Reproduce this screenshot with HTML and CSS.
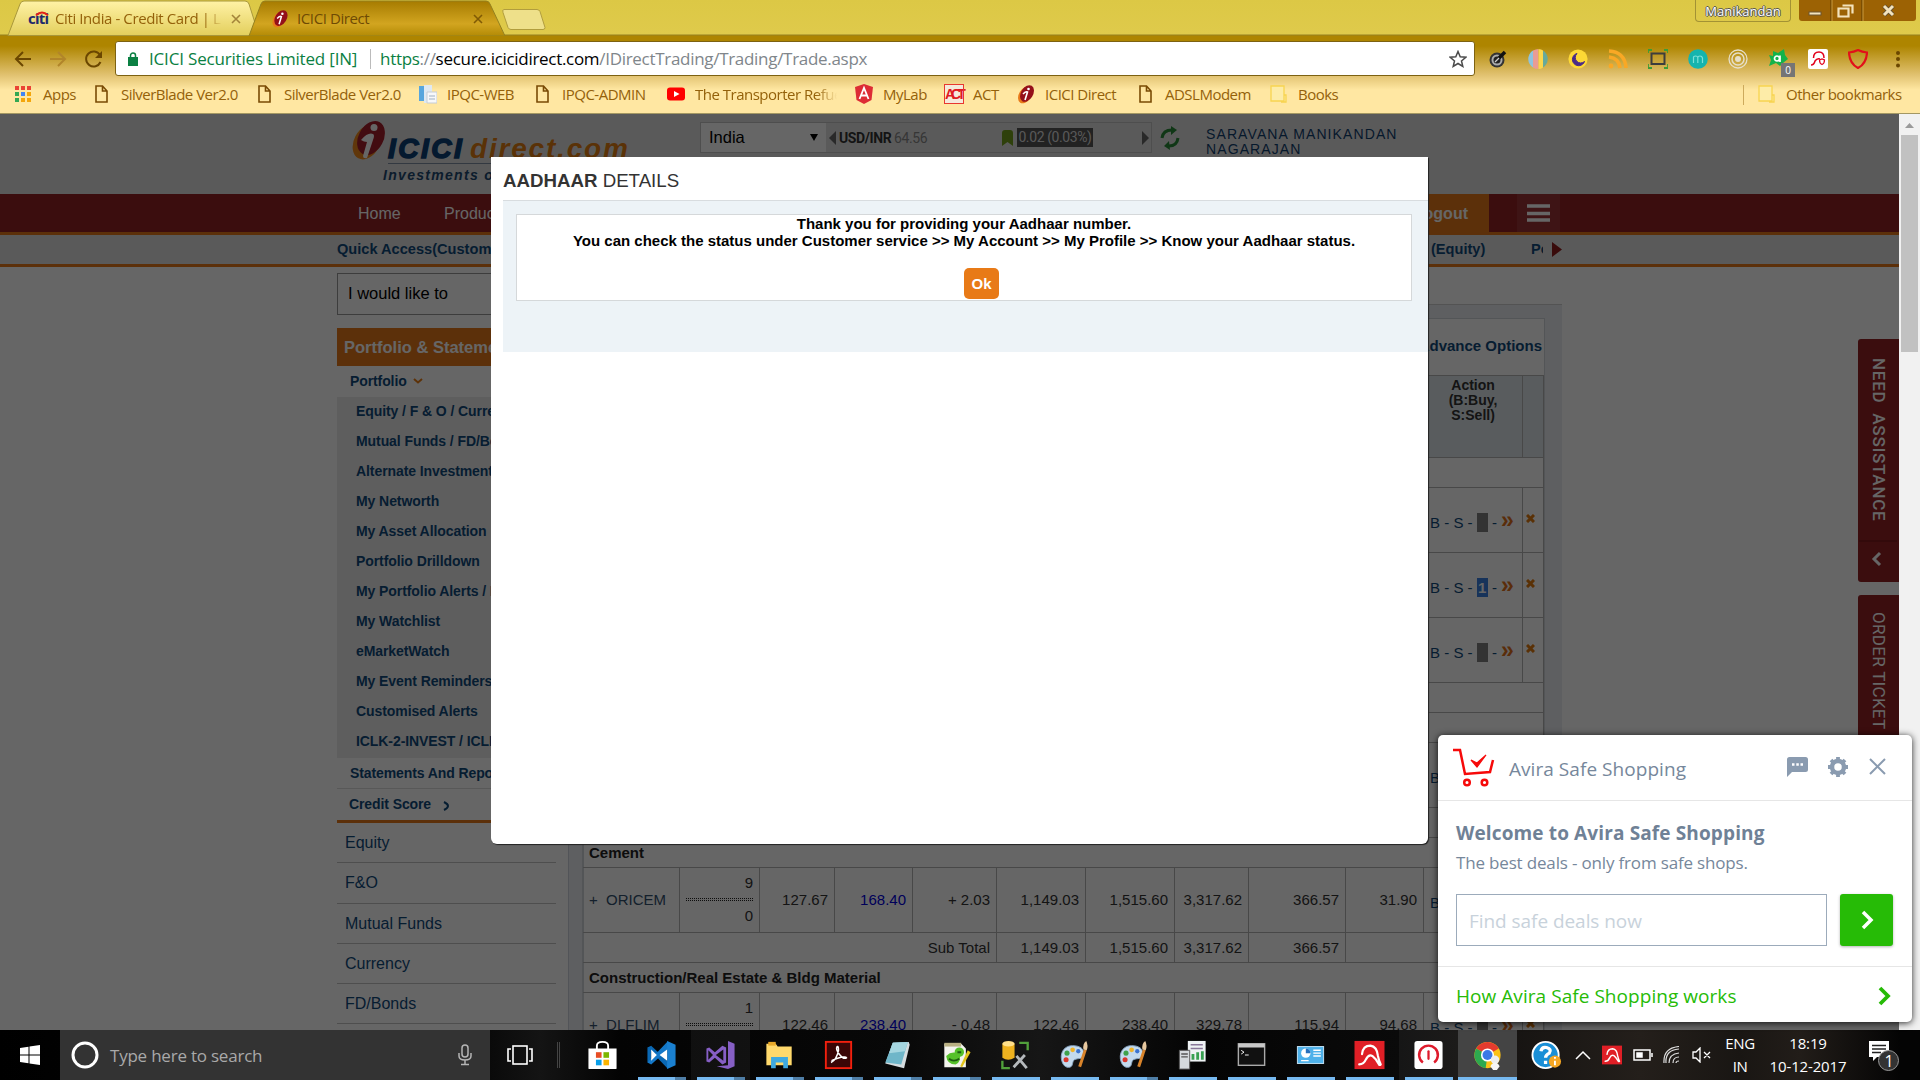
FILE: index.html
```html
<!DOCTYPE html>
<html lang="en">
<head>
<meta charset="utf-8">
<title>ICICI Direct</title>
<link rel="stylesheet" href="styles.css">
</head>
<body>
<svg class="defs" width="0" height="0">
  <symbol id="doc" viewBox="0 0 18 20"><path d="M3 2h6.500l4.500 5v11H3zM9.500 2v5H14" fill="none" stroke="#7a4b05" stroke-width="1.600"/></symbol>
  <symbol id="folder" viewBox="0 0 18 20"><path d="M1 2h13v15H1zM14 11h2v7h-5" fill="#fdeca8" stroke="#f8d450" stroke-width="1.300"/></symbol>
  <symbol id="icici" viewBox="0 0 18 20"><ellipse cx="8" cy="11" rx="6" ry="9" transform="rotate(32 8 11)" fill="#e87a1a"/><ellipse cx="10" cy="9.500" rx="6" ry="9" transform="rotate(32 10 9.500)" fill="#94101a"/><circle cx="11.500" cy="5" r="1.300" fill="#fff"/><path d="M6 10q3-3 4.500-2l-2.500 8" fill="none" stroke="#fff" stroke-width="1.600"/></symbol>
  <symbol id="palette" viewBox="0 0 32 32"><path d="M14 6C6 6 1 12 2 20c1 7 5 10 9 9 4-1 2-6 5-8 4-2 9 0 10-5C27 9 21 6 14 6z" fill="#c3daee" stroke="#8aa8c4"/><circle cx="8" cy="14" r="2.700" fill="#3fa24b"/><circle cx="14" cy="10.500" r="2.500" fill="#f0b429"/><circle cx="7" cy="21" r="2.700" fill="#d8372c"/><circle cx="20" cy="12" r="2.300" fill="#3b74d1"/><path d="M20 28l6-18 3 1-6 18z" fill="#d9842b"/><path d="M25.500 10q-1-6 3-9 2.500 5 .5 10z" fill="#e8c9a0"/></symbol>
  <symbol id="avira" viewBox="0 0 32 32"><path d="M0 1h32v30H0z" fill="#e01f26"/><path d="M5 26q5 0 7-5 3-6 7-4 4 3 7 9 1 1 2 0-2-4-3-9-1-10-8-11-8 0-9 9" fill="none" stroke="#fff" stroke-width="2.300" stroke-linecap="round" stroke-linejoin="round"/></symbol>
  <symbol id="cross" viewBox="0 0 9 9"><path d="M1 1l7 7M8 1l-7 7" stroke="#e07b10" stroke-width="3"/></symbol>
</svg>

<header class="browser">
  <div class="tabstrip">
    <svg class="tabshapes" width="560" height="36">
      <defs>
        <linearGradient id="g1" x2="0" y2="1"><stop offset="0" stop-color="#fff2a6"/><stop offset="1" stop-color="#e3cf5c"/></linearGradient>
        <linearGradient id="g2" x2="0" y2="1"><stop offset="0" stop-color="#a67b00"/><stop offset=".65" stop-color="#d2a520"/><stop offset="1" stop-color="#b38a05"/></linearGradient>
      </defs>
      <path d="M8 35.500L20 4q1-3 4-3h221q3 0 4 3l10 31.500z" fill="url(#g1)" stroke="#a8973a"/>
      <path d="M249 36L261 4q1-3 4-3h221q3 0 4 3l15 32z" fill="url(#g2)" stroke="#94801f"/>
      <path d="M504 9.500h33q2 0 3 2l5 16q0 2-2 2h-32q-2 0-3-2l-5-15q-1-3 1-3z" fill="#eee08a" stroke="#b19d3d"/>
    </svg>
    <div class="tab first">
      <b class="citi">citi<svg width="14" height="5" viewBox="0 0 14 5"><path d="M1 4.500q6-6 12 0" fill="none" stroke="#e2231a" stroke-width="1.800"/></svg></b>
      <span class="title fade">Citi India - Credit Card | L</span>
      <svg class="x" width="10" height="10"><path d="M1 1l8 8M9 1l-8 8" stroke="#a3843a" stroke-width="1.600"/></svg>
    </div>
    <div class="tab second">
      <svg width="18" height="19"><use href="#icici"/></svg>
      <span class="title">ICICI Direct</span>
      <svg class="x" width="10" height="10"><path d="M1 1l8 8M9 1l-8 8" stroke="#805a05" stroke-width="1.600"/></svg>
    </div>
    <div class="user">Manikandan</div>
    <div class="winbtns">
      <svg width="117" height="22"><path d="M0 0h117v18q0 3-3 3H3q-3 0-3-3z" fill="#9c6204"/><path d="M32 0v21M63 0v21" stroke="#5d3a00"/><path d="M33 0v21M64 0v21" stroke="#c99a3e"/>
      <rect x="10" y="12" width="12" height="3" fill="#f3e3bd" stroke="#6b5530"/><path d="M43.500 5.500h10v8M39.500 8.500h10v8h-10z" fill="none" stroke="#f3e3bd" stroke-width="2.200"/><path d="M85 6l9 9M94 6l-9 9" stroke="#574a35" stroke-width="4.500"/><path d="M85 6l9 9M94 6l-9 9" stroke="#f3e3bd" stroke-width="3"/></svg>
    </div>
  </div>

  <div class="toolbar">
    <svg class="navicons" width="104" height="34" fill="none" stroke-width="2"><path d="M31 17H16M23 10l-7 7 7 7" stroke="#6b4700"/><path d="M50 17h15M58 10l7 7-7 7" stroke="#b1852a"/><path d="M100 13a7.500 7.500 0 1 0 .5 7" stroke="#6b4700"/><path d="M102 9v7h-7z" fill="#6b4700"/></svg>
    <div class="omnibox">
      <svg width="10" height="14"><path d="M0 5h10v9H0z" fill="#0b8043"/><path d="M2.500 6V3.500a2.500 2.500 0 0 1 5 0V6" fill="none" stroke="#0b8043" stroke-width="1.500"/></svg>
      <span class="org">ICICI Securities Limited [IN]</span><i></i>
      <span class="url"><em>https</em>://<b>secure.icicidirect.com</b>/IDirectTrading/Trading/Trade.aspx</span>
      <svg class="star" width="18" height="18" viewBox="0 0 18 18"><path d="M9 1.500l2.200 5.200 5.600.5-4.300 3.700 1.300 5.500L9 13.500l-4.800 2.900 1.300-5.500L1.200 7.200l5.600-.5z" fill="none" stroke="#4b4b4b" stroke-width="1.500"/></svg>
    </div>
    <div class="exts">
      <svg viewBox="0 0 20 20"><circle cx="9" cy="11" r="7.500" fill="#333"/><circle cx="9" cy="11" r="5.500" fill="#aaa"/><circle cx="9" cy="11" r="3.500" fill="#222"/><path d="M11 9l6-6" stroke="#111" stroke-width="3.500"/><path d="M7 13l4-4" stroke="#ccc" stroke-width="1.300"/></svg>
      <svg viewBox="0 0 20 20"><path d="M5 1.500v17A10 10 0 0 1 5 1.500" fill="#8ec4df"/><path d="M5 1.500q3-1.500 5.500-1.500v20Q7 20 5 18.500z" fill="#ea9c94"/><path d="M10.500 0q3 0 4.500 1.500v17q-2 1.500-4.500 1.500z" fill="#fbd64c"/><path d="M15 1.500a10 10 0 0 1 0 17z" fill="#67a99a"/></svg>
      <svg viewBox="0 0 20 20"><circle cx="10" cy="10" r="9.600" fill="#fdd835"/><path d="M9 4.500a6.200 6.200 0 1 0 7.500 8A5 5 0 0 1 9 4.500z" fill="#4a2c87" stroke="#4a2c87"/></svg>
      <svg viewBox="0 0 20 20"><circle cx="3" cy="17" r="2.400" fill="#f9a825"/><path d="M1 8q10 1 11 11M1 2q16 1 17 17" fill="none" stroke="#f9a825" stroke-width="3.600"/></svg>
      <svg viewBox="0 0 20 20"><rect x="3.500" y="4.500" width="13" height="10.500" fill="none" stroke="#3d3d3d" stroke-width="2"/><path d="M0 4V1h4M16 1h4v3M20 15v4h-4M4 19H0v-4" fill="none" stroke="#3f9c35" stroke-width="1.800"/></svg>
      <svg viewBox="0 0 20 20"><circle cx="10" cy="10" r="9.800" fill="#15b4ae"/><path d="M5.500 14V8q0-1 2-1t2.300 1.500V14m0-5.500Q10 7 12 7t2.500 2v5" fill="none" stroke="#7ce0d8" stroke-width="1.200"/></svg>
      <svg viewBox="0 0 20 20" fill="none" stroke="#e6dfc9"><circle cx="10" cy="10" r="9" stroke-width="1.300"/><circle cx="10" cy="10" r="6" stroke-width="1.500"/><circle cx="10" cy="10" r="2" fill="#e6dfc9" stroke-width="2"/></svg>
      <svg viewBox="0 0 20 20"><path d="M5 2l5 2 6-4 1 6 3 4-5 4-3 3-4-3-7 3 2-6-2-5 4 1z" fill="#12b34a"/><circle cx="9" cy="9.500" r="2.500" fill="none" stroke="#fff" stroke-width="1.700"/><path d="M12 6.500V13" stroke="#fff" stroke-width="1.700"/></svg>
      <svg viewBox="0 0 20 20"><rect width="20" height="20" rx="2" fill="#fff"/><path d="M3 16q3 0 4-4 2-3 5-2M5.500 9q0-6 5.500-6 5 0 5 6" fill="none" stroke="#e2001a" stroke-width="1.500"/><path d="M11.500 11l2.500-1 2.500 1q0 3.500-2.500 4.500-2.500-1-2.500-4.500z" fill="none" stroke="#e2001a" stroke-width="1.200"/></svg>
      <svg viewBox="0 0 20 20"><path d="M1 3.500Q6 3 10 1q4 2 9 2.500-.5 11-9 15.500Q1.500 14.500 1 3.500z" fill="none" stroke="#e2101a" stroke-width="2.200"/></svg>
      <svg viewBox="0 0 20 20" fill="#6b4700"><circle cx="10" cy="4" r="2"/><circle cx="10" cy="10" r="2"/><circle cx="10" cy="16.500" r="2"/></svg>
      <span class="badge">0</span>
    </div>
  </div>

  <nav class="bookmarks">
    <a><svg viewBox="0 0 18 20"><path d="M0 2h4v4H0zM6 2h4v4H6zM12 2h4v4h-4z" fill="#ea4335"/><path d="M0 8h4v4H0zM0 14h4v4H0z" fill="#34a853"/><path d="M6 8h4v4H6z" fill="#4285f4"/><path d="M12 8h4v4h-4zM6 14h4v4H6zM12 14h4v4h-4z" fill="#f4a60b"/></svg><span>Apps</span></a>
    <a><svg><use href="#doc"/></svg><span>SilverBlade Ver2.0</span></a>
    <a><svg><use href="#doc"/></svg><span>SilverBlade Ver2.0</span></a>
    <a><svg viewBox="0 0 18 20"><path d="M0 2h5v15H0z" fill="#58a6dd"/><path d="M5 1h8v18H5z" fill="#dfe9f2"/><path d="M8 8h10v11H8z" fill="#f7f8fa" stroke="#c5ccd5"/><path d="M10 12h6M10 15h6" stroke="#9fb0c2"/></svg><span>IPQC-WEB</span></a>
    <a><svg><use href="#doc"/></svg><span>IPQC-ADMIN</span></a>
    <a><svg viewBox="0 0 18 20"><rect y="3.500" width="18" height="13" rx="3" fill="#f00"/><path d="M7 7l5.500 3L7 13z" fill="#fff"/></svg><span class="fade2">The Transporter Refueled</span></a>
    <a><svg viewBox="0 0 18 20"><path d="M9 0l9 3-1.500 13L9 20l-7.500-4L0 3z" fill="#dd2c35"/><path d="M4.500 15L9 4l4.500 11M6.500 11.500h5" stroke="#fff" stroke-width="1.800" fill="none"/></svg><span>MyLab</span></a>
    <a><b class="act">ACT</b><span>ACT</span></a>
    <a><svg><use href="#icici"/></svg><span>ICICI Direct</span></a>
    <a><svg><use href="#doc"/></svg><span>ADSLModem</span></a>
    <a><svg><use href="#folder"/></svg><span>Books</span></a>
    <a class="other"><svg><use href="#folder"/></svg><span>Other bookmarks</span></a>
  </nav>
</header>

<div class="viewport">
<main class="page">
  <div class="masthead">
    <div class="logo">
      <svg width="36" height="42" viewBox="0 0 36 42"><ellipse cx="15" cy="22" rx="13" ry="18.500" transform="rotate(28 15 22)" fill="#f08a1d"/><ellipse cx="19" cy="18" rx="12.500" ry="18" transform="rotate(28 19 18)" fill="#a61f2b"/><circle cx="22" cy="7.500" r="3.500" fill="#fff"/><path d="M9 20q7-8 12-6 2 1 0 6l-6 18q-4 1-4-2l4-14q-3 0-6-2z" fill="#fff"/></svg>
      <div class="words"><div class="word"><b>ICICI</b><i>direct.com</i></div><div class="tagline">Investments on your fingertips</div></div>
    </div>
    <div class="market">
      <div class="select">India<svg width="8" height="7"><path d="M0 0h8L4 7z" fill="#000"/></svg></div>
      <svg width="7" height="14"><path d="M7 0v14L0 7z" fill="#666"/></svg>
      <b>USD/INR</b><span class="rate">64.56</span>
      <svg class="flag" width="11" height="16"><path d="M0 3q0-3 3-3h5q3 0 3 3v13l-5.500-4L0 16z" fill="#74a01c"/></svg>
      <span class="chg">0.02 (0.03%)</span>
      <svg class="next" width="7" height="14"><path d="M0 0v14l7-7z" fill="#666"/></svg>
    </div>
    <svg class="refresh" width="20" height="24" viewBox="0 0 20 24" fill="none" stroke="#2a8a38" stroke-width="3"><path d="M2 12Q3 4 12 4M18 12q-1 8-9 8"/><path d="M11 0l6 4-6 5zM9 15l-5 5 6 4z" fill="#2a8a38" stroke="none"/></svg>
    <div class="client">SARAVANA MANIKANDAN<br>NAGARAJAN</div>
  </div>
  <nav class="mainnav">
    <div class="inner"><span>Home</span><span>Products</span><b class="logout">Logout</b><svg class="burger" width="43" height="38"><path d="M0 0h43v38H0z" fill="#fff" fill-opacity=".08"/><path d="M10 12h23M10 19.500h23M10 26h23" stroke="#fff" stroke-width="3.500"/></svg></div>
  </nav>
  <div class="quick"><div class="inner"><span>Quick Access(Customise)</span><span class="eq">(Equity)</span><span class="po">Portfolio</span><svg width="10" height="15"><path d="M0 0v15l10-7.500z" fill="#8f1d1d"/></svg></div></div>

  <div class="content">
    <aside class="side">
      <div class="would">I would like to</div>
      <h3>Portfolio &amp; Statements</h3>
      <div class="row pf">Portfolio<svg width="10" height="6"><path d="M1 1l4 3.500L9 1" fill="none" stroke="#e87d16" stroke-width="2"/></svg></div>
      <ul class="sub">
        <li>Equity / F &amp; O / Currency</li><li>Mutual Funds / FD/Bonds</li><li>Alternate Investments</li><li>My Networth</li><li>My Asset Allocation</li><li>Portfolio Drilldown</li><li>My Portfolio Alerts / News</li><li>My Watchlist</li><li>eMarketWatch</li><li>My Event Reminders</li><li>Customised Alerts</li><li>ICLK-2-INVEST / ICLK</li>
      </ul>
      <div class="row st">Statements And Reports</div>
      <div class="row cs">Credit Score<svg width="7" height="10"><path d="M1 1q4 2 4 4t-4 4" fill="none" stroke="#104a7c" stroke-width="2"/></svg></div>
      <ul class="cats"><li>Equity</li><li>F&amp;O</li><li>Mutual Funds</li><li>Currency</li><li>FD/Bonds</li></ul>
    </aside>
    <section class="panel">
      <div class="sheet">
        <div class="adv">Advance Options</div>
        <table>
          <colgroup><col class="c1"><col class="c2"><col class="c3"><col class="c4"><col class="c5"><col class="c6"><col class="c7"><col class="c8"><col class="c9"><col class="c10"><col class="c11"><col class="c12"></colgroup>
          <tr class="head"><th colspan="10"></th><th>Action<br>(B:Buy,<br>S:Sell)</th><th></th></tr>
          <tr class="s"><td colspan="12"></td></tr>
          <tr class="l"><td colspan="10"></td><td class="ac">B - S - <mark>&nbsp;</mark> - <u>»</u></td><td class="del"><svg width="9" height="9"><use href="#cross"/></svg></td></tr>
          <tr class="l"><td colspan="10"></td><td class="ac">B - S - <mark class="on">1</mark> - <u>»</u></td><td class="del"><svg width="9" height="9"><use href="#cross"/></svg></td></tr>
          <tr class="l"><td colspan="10"></td><td class="ac">B - S - <mark>&nbsp;</mark> - <u>»</u></td><td class="del"><svg width="9" height="9"><use href="#cross"/></svg></td></tr>
          <tr class="s"><td colspan="12"></td></tr>
          <tr class="s"><td colspan="12"></td></tr>
          <tr class="l"><td colspan="10"></td><td class="ac">B</td><td></td></tr>
          <tr class="s"><td colspan="12"></td></tr>
          <tr class="s"><td colspan="12" class="sec">Cement</td></tr>
          <tr class="l"><td class="nm">+ &nbsp;ORICEM</td><td class="q">9<hr>0</td><td>127.67</td><td class="bl">168.40</td><td>+ 2.03</td><td>1,149.03</td><td>1,515.60</td><td>3,317.62</td><td>366.57</td><td>31.90</td><td class="ac">B</td><td></td></tr>
          <tr class="s"><td colspan="5">Sub Total</td><td>1,149.03</td><td>1,515.60</td><td>3,317.62</td><td>366.57</td><td colspan="3"></td></tr>
          <tr class="s"><td colspan="12" class="sec">Construction/Real Estate &amp; Bldg Material</td></tr>
          <tr class="l"><td class="nm">+ &nbsp;DLFLIM</td><td class="q">1<hr>0</td><td>122.46</td><td class="bl">238.40</td><td>- 0.48</td><td>122.46</td><td>238.40</td><td>329.78</td><td>115.94</td><td>94.68</td><td class="ac">B - S - <mark>&nbsp;</mark> - <u>»</u></td><td class="del"><svg width="9" height="9"><use href="#cross"/></svg></td></tr>
        </table>
      </div>
    </section>
  </div>
  <div class="sidetabs">
    <div class="need"><span>NEED&nbsp; ASSISTANCE</span><svg width="41" height="42"><path d="M1 1h38" stroke="#6e1414"/><path d="M22 13l-6 6 6 6" fill="none" stroke="#fff" stroke-width="3"/></svg></div>
    <div class="order"><span>ORDER TICKET</span></div>
  </div>
  <div class="shade"></div>
  <div class="modal">
    <h2><b>AADHAAR</b> DETAILS</h2>
    <div class="mbody"><div class="mbox">
      <p>Thank you for providing your Aadhaar number.</p>
      <p>You can check the status under Customer service &gt;&gt; My Account &gt;&gt; My Profile &gt;&gt; Know your Aadhaar status.</p>
      <button>Ok</button>
    </div></div>
  </div>
</main>
<div class="scroll"><svg width="9" height="5"><path d="M0 5h9L4.500 0z" fill="#9a9a9a"/></svg><div class="thumb"></div></div>
</div>

<footer class="taskbar">
  <div class="start"><svg width="20" height="20"><path d="M0 3l8.500-1.200V9.500H0zM9.500 1.600L20 0v9.500H9.500zM0 10.500h8.500v7.700L0 17zM9.500 10.500H20V20L9.500 18.400z" fill="#fff"/></svg></div>
  <div class="search"><svg width="28" height="28"><circle cx="14" cy="14" r="12" fill="none" stroke="#fff" stroke-width="3"/></svg><span>Type here to search</span><svg class="mic" width="16" height="22" fill="none" stroke="#b5b5b5" stroke-width="1.500"><rect x="5" y="1" width="6" height="12" rx="3"/><path d="M2 9v3q0 4 6 4t6-4V9M8 16v4M4 20.500h8"/></svg></div>
  <div class="tv"><svg width="26" height="22" fill="none" stroke="#fff" stroke-width="1.600"><rect x="6" y="2" width="14" height="18"/><path d="M4 5H1v12h3M22 5h3v12h-3"/></svg><i></i></div>
  <div class="apps">
    <span><svg viewBox="0 0 32 32"><path d="M10 11V6q0-4 6-4t6 4v5" fill="none" stroke="#fff" stroke-width="2"/><path d="M1 9h30v21q0 1-1 1H2q-1 0-1-1z" fill="#fff"/><path d="M9 13h6v6H9z" fill="#e74e25"/><path d="M17 13h6v6h-6z" fill="#7db700"/><path d="M9 21h6v6H9z" fill="#0a9fe9"/><path d="M17 21h6v6h-6z" fill="#fbb400"/></svg></span>
    <span class="run multi"><svg viewBox="0 0 32 32"><path d="M1 8l4-2 18 17v8z" fill="#0a68b4"/><path d="M1 8l4 2v12l-4 2z" fill="#0a68b4"/><path d="M1 24l4 2L23 10V1z" fill="#1478c8"/><path d="M22 1l9 4v22l-9 4z" fill="#1a80d0"/><path d="M5 10v12l6-6zM22 10v12l-8-6z" fill="#fff"/></svg></span>
    <span class="run multi lit"><svg viewBox="0 0 32 32"><path d="M24 1l7 3v24l-7 3-12-3 12-1z" fill="#865fc5"/><path d="M3 11v10l5-5zm8 5l8-6v12zM1 9l3-1 6 5 8-7 4 2v16l-4 2-8-7-6 5-3-1z" fill="#865fc5" fill-rule="evenodd"/></svg></span>
    <span class="run multi"><svg viewBox="0 0 32 32"><path d="M2 4h10l2 3h15v20H2z" fill="#ffd96c"/><path d="M4 2h8v4H4z" fill="#e8a92a"/><path d="M7 30V18h18v12h-5v-6h-8v6z" fill="#3fa9e0"/></svg></span>
    <span class="run multi"><svg viewBox="0 0 32 32"><rect x="2.500" y="2" width="27" height="28" fill="#3a0606" stroke="#f3200e" stroke-width="2"/><path d="M8 24q6-3 8-13 0-5-1.500-4-2 3 3 9 4 5 7 3-1-3-16 3" fill="none" stroke="#fff" stroke-width="1.600"/></svg></span>
    <span class="run multi"><svg viewBox="0 0 32 32"><path d="M11 3l17-1 1 3-6 25-20-5z" fill="#d5dde0"/><path d="M11 3l16-1-7 24-17-2z" fill="#6fb6c9"/><path d="M11 3l16-1-3 10-17 2z" fill="#a5d6e0"/></svg></span>
    <span class="run multi"><svg viewBox="0 0 32 32"><path d="M3 4h18l5 5v20H3z" fill="#f4f4ee"/><path d="M3 3h18v4H3z" fill="#b9b083"/><circle cx="19" cy="13" r="5" fill="#56c12a"/><path d="M5 17q6-6 14-2 3 8-4 11-9 0-10-9z" fill="#56c12a"/><path d="M8 20q5 4 11 0M17 13h4" stroke="#1d5d10" stroke-width="2" fill="none"/><path d="M20 28L28 11l3 2-9 16z" fill="#e2c31b"/></svg></span>
    <span class="run"><svg viewBox="0 0 32 32"><path d="M2 4v15q6 4 13 0V4" fill="#eeb21f"/><ellipse cx="8.500" cy="4" rx="6.500" ry="3" fill="#ffe08a"/><path d="M20 3h9v8M2 22v8h8" fill="none" stroke="#51a13b" stroke-width="2.500"/><path d="M14 29l12-13M17 17l11 13" stroke="#b5b9bc" stroke-width="3"/></svg></span>
    <span class="run"><svg><use href="#palette"/></svg></span>
    <span class="run multi"><svg><use href="#palette"/></svg></span>
    <span class="run"><svg viewBox="0 0 32 32"><path d="M11 1h19v22H11z" fill="#eef2f4"/><path d="M14 5h13M14 9h13" stroke="#879" stroke-width="1.500"/><path d="M15 21v-6h3v6M20 21v-8h3v8M25 21v-9h3v9" fill="#38a051"/><path d="M2 11h11v20H2z" fill="#d5dadd" stroke="#555"/><path d="M4 15h7M4 18h7" stroke="#555" stroke-width="1.500"/></svg></span>
    <span class="run"><svg viewBox="0 0 32 32"><rect x="2" y="4" width="28" height="23" fill="#111" stroke="#aaa" stroke-width="1.500"/><path d="M2 4h28v4H2z" fill="#c8c8c8"/><path d="M5 11l3 2-3 2M9 16h4" stroke="#fff" fill="none"/></svg></span>
    <span class="run"><svg viewBox="0 0 32 32"><rect x="2" y="7" width="28" height="18" fill="#4eb1ea" stroke="#c9e7fa"/><circle cx="11" cy="14" r="5" fill="#fff"/><path d="M11 14V9a5 5 0 0 1 5 5z" fill="#2871bd"/><path d="M19 11h8M19 14h8M19 17h8M6 22h8" stroke="#fff" stroke-width="1.500"/></svg></span>
    <span class="run"><svg><use href="#avira"/></svg></span>
    <span class="run lit"><svg viewBox="0 0 32 32"><rect x="1" y="1" width="30" height="30" rx="3" fill="#fff"/><path d="M10 24a10 10 0 1 1 12 0" fill="none" stroke="#de1b2c" stroke-width="2.600"/><path d="M16 12v8" stroke="#de1b2c" stroke-width="2.400" stroke-linecap="round"/></svg></span>
    <span class="run active"><svg viewBox="0 0 32 32"><circle cx="16" cy="16" r="14" fill="#fbc116"/><path d="M16 16L4 9A14 14 0 0 1 28 9z" fill="#e33b2e"/><path d="M16 16l-2 14A14 14 0 0 1 4 9z" fill="#2da94f"/><circle cx="16" cy="16" r="7" fill="#fff"/><circle cx="16" cy="16" r="5.300" fill="#3c78e6"/><circle cx="24" cy="21" r="4.500" fill="#eee"/><path d="M19 28q5-8 10 0l-3 4h-4z" fill="#f6f6f6"/></svg></span>
    <span><svg viewBox="0 0 32 32"><circle cx="15" cy="16" r="14" fill="#1a8fd6" stroke="#fff" stroke-width="2"/><path d="M10 12q1-5 6-4 6 2 3 6-4 2-4 5M15 22v3.500" fill="none" stroke="#fff" stroke-width="3.500"/><circle cx="25" cy="23" r="6.500" fill="#f5a623"/><path d="M25 22v5M25 18v2" stroke="#fff" stroke-width="2"/></svg></span>
  </div>
  <div class="tray">
    <svg width="16" height="10"><path d="M1 9l7-7 7 7" fill="none" stroke="#fff" stroke-width="1.500"/></svg>
    <svg width="20" height="20"><use href="#avira"/></svg>
    <svg width="20" height="12" fill="none" stroke="#fff" stroke-width="1.500"><rect x="1" y="1" width="16" height="10"/><path d="M19 4v4"/><path d="M4 4h5v4H4z" fill="#fff"/></svg>
    <svg width="18" height="18" fill="none" stroke="#ddd" stroke-width="1.200"><path d="M3 17Q2 4 16 3M6 17Q6 8 16 7M10 17q0-6 6-6M13 17q0-2 3-2M1 17Q0 2 16 .5"/></svg>
    <svg width="20" height="16" fill="none" stroke="#fff" stroke-width="1.300"><path d="M1 5h3l4-4v14l-4-4H1zM12 5l6 6M18 5l-6 6"/></svg>
  </div>
  <div class="lang">ENG<br>IN</div>
  <div class="clock">18:19<br>10-12-2017</div>
  <div class="notif"><svg width="34" height="34"><path d="M1 3h20v16H9l-4 4v-4H1z" fill="#fff"/><path d="M4 7.500h14M4 11h14M4 14.500h9" stroke="#222" stroke-width="1.300"/><circle cx="20.500" cy="22.500" r="10" fill="#333" stroke="#999"/></svg><span>1</span></div>
</footer>

<div class="avira">
  <div class="ahead">
    <svg width="42" height="40" viewBox="0 0 42 40" fill="none" stroke="#f60a0a" stroke-width="2.500"><path d="M0 2h7l5 24 25-2 3-12"/><path d="M18 12l6 7 9-12-9 8z" fill="#f60a0a" stroke-width="1.200"/><circle cx="14" cy="34.500" r="2.800"/><circle cx="31.500" cy="34.500" r="2.800"/></svg>
    <span>Avira Safe Shopping</span>
    <svg class="chat" width="21" height="20"><path d="M2.500 0h16Q21 0 21 2.500v10Q21 15 18.500 15H5l-5 5V2.500Q0 0 2.500 0z" fill="#8a9bb0"/><path d="M5 7.500h2.500M9.300 7.500h2.500M13.500 7.500H16" stroke="#fff" stroke-width="2.500"/></svg>
    <svg class="gear" width="22" height="22"><circle cx="11" cy="11" r="6" fill="none" stroke="#8a9bb0" stroke-width="4.500"/><path d="M11 1v3M11 18v3M1 11h3M18 11h3M4 4l2 2M16 16l2 2M18 4l-2 2M6 16l-2 2" stroke="#8a9bb0" stroke-width="3.800"/></svg>
    <svg class="cls" width="17" height="17"><path d="M1 1l15 15M16 1L1 16" stroke="#8a9bb0" stroke-width="2"/></svg>
  </div>
  <div class="abody">
    <h4>Welcome to Avira Safe Shopping</h4>
    <p>The best deals - only from safe shops.</p>
    <div class="find"><div class="inp">Find safe deals now</div><div class="go"><svg width="14" height="20"><path d="M3 2l8 8-8 8" fill="none" stroke="#fff" stroke-width="3.500"/></svg></div></div>
  </div>
  <div class="afoot"><span>How Avira Safe Shopping works</span><svg width="14" height="20"><path d="M2 2l8 8-8 8" fill="none" stroke="#26bb06" stroke-width="3.800"/></svg></div>
</div>
</body>
</html>
```
FILE: styles.css
```css
* { box-sizing: border-box; }
body { margin: 0; width: 1920px; height: 1080px; overflow: hidden; position: relative; display: flex; flex-direction: column; font-family: "Liberation Sans", Arial, sans-serif; }
.defs { position: absolute; }
ul { list-style: none; margin: 0; padding: 0; }
svg { flex: none; display: block; }

/* browser chrome */
.browser { height: 114px; flex: none; font-family: "Open Sans", "Noto Sans", sans-serif; color: #94610a; border-bottom: 1px solid #a39763; background: linear-gradient(#dcc845 0, #dfca4b 34px, #94801f 35px, #ae8500 36px, #ae8500 46px, #e3c474 76px, #ffe7a2 90px, #ffe7a2 113px); }
.tabstrip { height: 36px; position: relative; display: flex; }
.tabshapes { position: absolute; left: 0; top: 0; }
.tab { position: relative; display: flex; align-items: center; height: 36px; font-size: 15px; letter-spacing: -.4px; padding-top: 0; }
.first { width: 249px; padding-left: 28px; }
.second { width: 256px; padding-left: 22px; color: #6e4a04; }
.tab .title { white-space: nowrap; }
.tab .x { margin-top: 2px; }
.citi { position: relative; color: #1f2a6b; font-size: 15px; width: 20px; letter-spacing: -.8px; margin-right: 7px; }
.citi svg { position: absolute; left: 7px; top: 3px; }
.fade { width: 168px; overflow: hidden; -webkit-mask: linear-gradient(90deg, #000 88%, transparent); mask: linear-gradient(90deg, #000 88%, transparent); }
.first .x { margin-left: 8px; }
.second .title { width: 176px; margin-left: 8px; }
.user { margin-left: 1190px; width: 96px; height: 22px; border: 1px solid #a39234; border-top: 0; border-radius: 0 0 4px 4px; color: #fff; font-size: 13px; line-height: 22px; text-align: center; letter-spacing: 0; text-shadow: 1px 0 0 #555, -1px 0 0 #555, 0 1px 0 #555, 0 -1px 0 #555; }
.winbtns { margin-left: 8px; }
.toolbar { height: 40px; display: flex; align-items: center; padding-top: 5px; }
.navicons { margin-right: 11px; }
.omnibox { width: 1360px; height: 35px; background: #fff; border: 1px solid #7d6212; border-radius: 3px; display: flex; align-items: center; padding-left: 12px; font-size: 17px; letter-spacing: -.3px; white-space: nowrap; }
.org { color: #0b8043; margin-left: 11px; width: 221px; letter-spacing: -.18px; }
.omnibox i { width: 1px; height: 20px; background: #bbb; }
.url { color: #80868b; margin-left: 9px; }
.url em { font-style: normal; color: #0b8043; }
.url b { font-weight: 400; color: #000; }
.star { margin-left: auto; margin-right: 7px; }
.exts { position: relative; display: flex; gap: 20px; margin-left: 13px; }
.exts svg { width: 20px; height: 20px; }
.badge { position: absolute; left: 293px; top: 14px; width: 14px; height: 14px; background: #757575; color: #fff; font-size: 10px; line-height: 14px; text-align: center; }
.bookmarks { height: 36px; display: grid; grid-template-columns: 78px 163px 163px 115px 133px 188px 90px 72px 120px 133px 488px 162px; padding-left: 15px; align-items: center; font-size: 15px; letter-spacing: -.5px; }
.bookmarks a { display: flex; align-items: center; gap: 10px; white-space: nowrap; }
.bookmarks a span { margin-top: -1px; }
.bookmarks svg { width: 18px; height: 20px; }
.bookmarks .other { position: relative; }
.other::before { content: ""; position: absolute; left: -15px; top: 1px; width: 1px; height: 20px; background: #cdaa5c; }
.fade2 { width: 142px; overflow: hidden; -webkit-mask: linear-gradient(90deg, #000 85%, transparent); mask: linear-gradient(90deg, #000 85%, transparent); }
.act { width: 18px; height: 18px; background: #f5e9dc; color: #e01b22; font: bold 14px/18px "Liberation Sans", sans-serif; letter-spacing: -4px; text-align: left; outline: 1px solid #e8382f; padding-left: 0; }

/* web page */
.viewport { height: 916px; flex: none; display: flex; }
.page { width: 1899px; height: 916px; position: relative; overflow: hidden; background: #fff; }
.masthead { height: 80px; background: #e2e2e2; padding: 6px 0 0 352px; display: flex; align-items: flex-start; }
.logo { display: flex; width: 348px; }
.words { margin-top: 14px; white-space: nowrap; }
.word { height: 30px; display: flex; font-size: 28px; line-height: 30px; font-style: italic; color: #0b3f75; border-bottom: 1px solid #7f8fa3; width: 242px; }
.word b { width: 82px; letter-spacing: 2.500px; -webkit-text-stroke: 1.500px #0b3f75; }
.word i { color: #e07d12; font-weight: 700; letter-spacing: 1.800px; }
.tagline { font: italic bold 14px/22px "Liberation Sans", sans-serif; color: #20476f; letter-spacing: 1.300px; margin-left: -5px; }
.market { width: 452px; height: 31px; margin-top: 2px; border: 1px solid #c4c4c4; display: flex; align-items: center; font: 14px "Roboto", sans-serif; letter-spacing: -.4px; color: #888; }
.market > * { flex: none; }
.select { width: 125px; height: 29px; background: #fff; color: #000; font: 16.500px/29px "Liberation Sans", Arial, sans-serif; letter-spacing: 0; padding: 0 8px 0 8px; display: flex; justify-content: space-between; align-items: center; margin-right: 3px; }
.market b { color: #333; margin-left: 3px; width: 55px; }
.rate { width: 108px; }
.chg { background: #555; color: #ddd; margin-left: 4px; width: 76px; height: 19px; line-height: 19px; text-align: center; }
.next { margin-left: 49px; }
.refresh { margin: 6px 0 0 8px; }
.client { margin: 7px 0 0 26px; font-size: 14px; line-height: 15px; letter-spacing: 1.100px; color: #10406e; }
.inner { width: 1225px; margin: 0 auto; display: flex; align-items: center; height: 100%; }
.mainnav { height: 41px; background: #932124; border-bottom: 3px solid #e6781a; color: #fff; font-size: 16px; }
.mainnav span { margin-left: 21px; width: 65px; padding-top: 1px; }
.logout { margin-left: 892px; height: 41px; width: 88px; padding-right: 21px; background: #e6781a; line-height: 39px; text-align: right; align-self: flex-start; }
.burger { margin-left: 28px; }
.quick { height: 32px; background: #e2e2e2; border-bottom: 3px solid #e6781a; font-size: 14.600px; font-weight: 700; color: #104a7c; }
.quick span { white-space: nowrap; overflow: hidden; padding-bottom: 1px; flex: none; }
.quick .eq { margin-left: 921px; width: 57px; }
.quick span:first-child { width: 173px; }
.quick .po { margin-left: 43px; width: 12px; }
.quick svg { margin-left: 9px; }
.content { width: 1225px; margin: 0 auto; display: flex; }
.side { width: 219px; flex: none; padding-top: 6px; color: #104a7c; white-space: nowrap; }
.would { height: 42px; border: 1px solid #999; font-size: 16.500px; line-height: 39px; padding-left: 10px; color: #000; }
.side h3 { margin: 13px 0 0; height: 38px; background: #e6781a; color: #fff; font-size: 16.500px; line-height: 39px; padding-left: 7px; overflow: hidden; }
.row { font-size: 14px; font-weight: 700; padding-left: 13px; display: flex; align-items: center; letter-spacing: -.1px; }
.pf { height: 31px; gap: 6px; padding-bottom: 2px; }
.sub { background: #ebebeb; height: 361px; margin-top: 0; }
.sub li { height: 30px; line-height: 29px; padding-left: 19px; font-size: 14px; letter-spacing: -.08px; font-weight: 700; overflow: hidden; }
.st { height: 31px; border-bottom: 1px solid #ddd; }
.cs { height: 34px; border-bottom: 3px solid #e6781a; gap: 12px; padding: 0 0 2px 12px; }
.cs svg { margin-top: 4px; }
.cats li { height: 40.300px; line-height: 39px; border-bottom: 1px solid #c3c3c3; font-size: 16px; padding-left: 8px; }
.panel { margin: 37px 0 0 12px; width: 994px; height: 726px; background: #ebeef3; border-top: 1px solid #d0d0d0; border-left: 1px solid #cdd3dc; padding: 13px 17px 0 13px; }
.sheet { border: 1px solid #cfd4da; border-bottom: 0; background: #fff; width: 963px; height: 712px; overflow: hidden; }
.adv { height: 56px; line-height: 54px; text-align: right; font-size: 15px; font-weight: 700; color: #104a7c; padding-right: 2px; }
table { border-collapse: collapse; table-layout: fixed; width: 960px; font-size: 15px; color: #333; }
td, th { border: 1px solid #b5b5b5; padding: 0 6px 2px 0; text-align: right; overflow: hidden; white-space: nowrap; }
tr > :first-child { border-left-color: #cfd4da; }
.c1 { width: 96px; } .c2 { width: 80px; } .c3 { width: 75px; } .c4 { width: 78px; } .c5 { width: 84px; } .c6 { width: 89px; }
.c7 { width: 89px; } .c8 { width: 74px; } .c9 { width: 97px; } .c10 { width: 78px; } .c11 { width: 99px; } .c12 { width: 21px; }
.head { height: 82px; background: #dee7ec; }
.head th { font-size: 14px; line-height: 15px; vertical-align: top; text-align: center; padding: 2px 0 0; }
.s { height: 30px; }
.s td { padding-bottom: 0; }
.l { height: 65px; }
td.sec { text-align: left; font-weight: 700; padding-left: 5px; color: #222; }
td.nm { text-align: left; padding-left: 5px; color: #33506e; }
td.q { line-height: 18px; }
.q hr { margin: 6px 0 6px 6px; height: 3px; border: 1px dotted #222; }
td.bl { color: #0000e0; }
td.ac { text-align: left; padding: 5px 0 0 6px; color: #104a7c; word-spacing: 0; }
.ac mark { display: inline-block; width: 11px; height: 19px; line-height: 19px; background: #808080; color: #fff; vertical-align: middle; margin-top: -3px; font-weight: 700; text-align: center; }
.ac .on { background: #3b7fe0; }
.ac u { text-decoration: none; color: #e0701a; font-weight: 700; font-size: 23px; line-height: 15px; }
td.del { padding: 0 0 4px 3px; }
.sidetabs { position: absolute; right: 0; top: 225px; display: flex; flex-direction: column; gap: 13px; color: #fff; font-family: "Roboto", sans-serif; font-size: 17px; }
.sidetabs div { width: 41px; background: #932124; border-radius: 3px 0 0 3px; }
.sidetabs span { writing-mode: vertical-rl; width: 41px; line-height: 41px; display: block; }
.need { height: 243px; font-weight: 500; }
.need span { height: 201px; padding-top: 19px; letter-spacing: .75px; }
.order { height: 180px; }
.order span { padding-top: 17px; letter-spacing: .3px; }
.shade { position: absolute; inset: 0; background: rgba(0, 0, 0, .6); }
.modal { position: absolute; left: 491px; top: 43px; width: 937px; height: 687px; background: #fff; border-radius: 0 0 6px 6px; box-shadow: 1px 1px 1px #222; padding-left: 12px; }
.modal h2 { margin: 0; height: 44px; line-height: 48px; font-size: 18.700px; font-weight: 400; color: #333; border-bottom: 1px solid #d8dcdf; }
.mbody { background: #edf3f7; height: 151px; padding: 13px 16px 0 13px; }
.mbox { height: 87px; background: #fff; border: 1px solid #d5d8da; text-align: center; font-size: 15px; font-weight: 700; padding-top: 0; color: #000; white-space: nowrap; }
.mbox p { margin: 0; line-height: 17px; }
.mbox button { display: block; margin: 19px auto 0 447px; width: 35px; height: 31px; border: 0; border-radius: 5px; background: #e87a17; color: #fff; font: bold 15px "Liberation Sans", sans-serif; padding: 0; }
.scroll { width: 21px; background: #f1f1f1; padding: 9px 2px 0; }
.scroll svg { margin-left: 4px; }
.thumb { margin-top: 7px; height: 217px; width: 17px; background: #c1c1c1; }

/* taskbar */
.taskbar { height: 50px; flex: none; display: flex; align-items: center; color: #fff; font-family: "Open Sans", "Noto Sans", sans-serif; background: linear-gradient(90deg, #000 0, #0a0a0a 490px, #141414 540px, #030303 620px, #080808 900px, #161616 1040px, #040404 1200px, #0a0a0a 1400px, #241f1b 1640px, #191613 1740px, #221d19 1800px, #040404 1900px); }
.taskbar > * { flex: none; }
.start { width: 60px; padding-left: 20px; }
.search { width: 430px; height: 50px; background: #333; display: flex; align-items: center; padding: 0 17px 0 11px; color: #a9a9a9; font-size: 17px; letter-spacing: -.22px; }
.search span { margin-left: 11px; }
.mic { margin-left: auto; }
.tv { width: 83px; display: flex; align-items: center; padding-left: 17px; }
.tv i { margin-left: 24px; width: 3px; height: 26px; border: 1px solid #444; border-width: 0 1px; }
.apps { display: flex; height: 50px; }
.apps span { width: 59px; height: 50px; padding: 10px 14px 0; position: relative; }
.apps svg { width: 31px; height: 30px; }
.run::after { content: ""; position: absolute; left: 6px; bottom: 0; width: 48px; height: 3px; background: #76b9f0; }
.multi::after { background: linear-gradient(90deg, #76b9f0 37px, #4f7ea6 37px); }
.lit { background: rgba(255, 255, 255, .05); }
.active { background: #444; }
.active::after { left: 0; width: 59px; }
.tray { display: flex; align-items: center; margin-left: -1px; width: 137px; justify-content: space-between; }
.lang, .clock { font-size: 15px; line-height: 23px; text-align: center; letter-spacing: -.4px; }
.lang { width: 36px; margin-left: 10px; }
.clock { width: 84px; margin-left: 8px; letter-spacing: -.15px; }
.notif { margin-left: 18px; position: relative; }
.notif span { position: absolute; left: 11px; top: 11px; width: 20px; text-align: center; font-size: 16px; line-height: 24px; }

/* shopping popup */
.avira { position: absolute; left: 1438px; top: 735px; width: 474px; height: 287px; background: #fff; border-radius: 5px; box-shadow: 0 1px 7px rgba(0, 0, 0, .85); font-family: "Open Sans", "Noto Sans", sans-serif; color: #76879b; }
.ahead { height: 66px; border-bottom: 1px solid #e6e6e6; display: flex; align-items: center; padding-left: 15px; }
.ahead span { font-size: 19px; letter-spacing: .05px; margin: 2px 0 0 14px; width: 278px; white-space: nowrap; }
.chat { margin-top: -1px; }
.gear { margin-left: 19px; margin-top: -2px; }
.cls { margin-left: 20px; margin-top: -2px; }
.abody { height: 166px; border-bottom: 1px solid #e6e6e6; padding: 18px 19px 0 18px; white-space: nowrap; }
.abody h4 { margin: 0; font-size: 19px; line-height: 28px; letter-spacing: .13px; color: #6f8196; }
.abody p { margin: 2px 0 17px; font-size: 17px; line-height: 28px; letter-spacing: -.17px; }
.find { display: flex; justify-content: space-between; }
.inp { width: 371px; height: 52px; border: 1px solid #9cabbb; line-height: 52px; padding-left: 12px; font-size: 19px; color: #c8d2db; letter-spacing: -.05px; }
.go { width: 53px; height: 52px; background: #26bb06; border-radius: 3px; display: flex; align-items: center; justify-content: center; box-shadow: 0 1px 3px rgba(0, 0, 0, .3); }
.afoot { height: 55px; display: flex; align-items: center; justify-content: space-between; padding: 2px 20px 0 18px; color: #26bb06; font-size: 19px; letter-spacing: .05px; }
```
